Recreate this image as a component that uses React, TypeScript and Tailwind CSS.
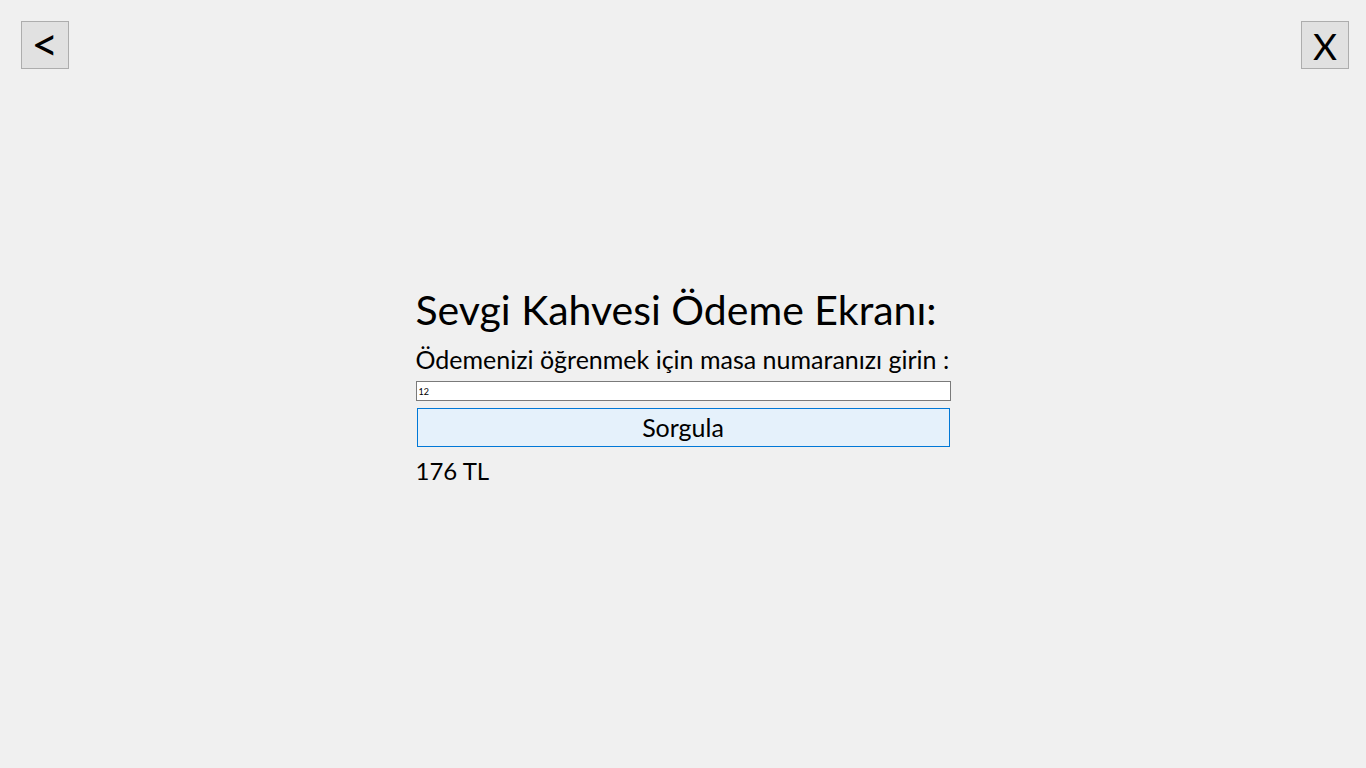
import React from 'react'

const App = () => {
    return (
        <div className="w-full h-screen bg-[#f0f0f0] flex flex-col font-['Lato',sans-serif] text-black">
            <div className="flex justify-between items-start pl-[21px] pr-[17px] pt-[21px]">
                <button className="w-[48px] h-[48px] bg-[#e1e1e1] border border-[#adadad] flex items-center justify-center text-[47px] leading-none pb-[4px]">
                    &lt;
                </button>
                <button className="w-[48px] h-[48px] bg-[#e1e1e1] border border-[#adadad] flex items-center justify-center text-[37px] leading-none">
                    X
                </button>
            </div>

            <div className="mx-auto w-[535px] mt-[217px] flex flex-col">
                <h1 className="text-[41px] leading-[48px]">Sevgi Kahvesi Ödeme Ekranı:</h1>
                <p className="mt-[10px] text-[25px] leading-[30px]">Ödemenizi öğrenmek için masa numaranızı girin :</p>
                <input
                    defaultValue="12"
                    className="mt-[7px] h-[20px] w-full bg-white border border-[#7a7a7a] px-[2px] text-[9px] outline-none"
                />
                <button className="mt-[7px] mx-[1px] h-[39px] bg-[#e5f1fb] border border-[#0078d7] text-[25px]">
                    Sorgula
                </button>
                <span className="mt-[9px] text-[24px] leading-[30px]">176 TL</span>
            </div>
        </div>
    )
}

export default App
